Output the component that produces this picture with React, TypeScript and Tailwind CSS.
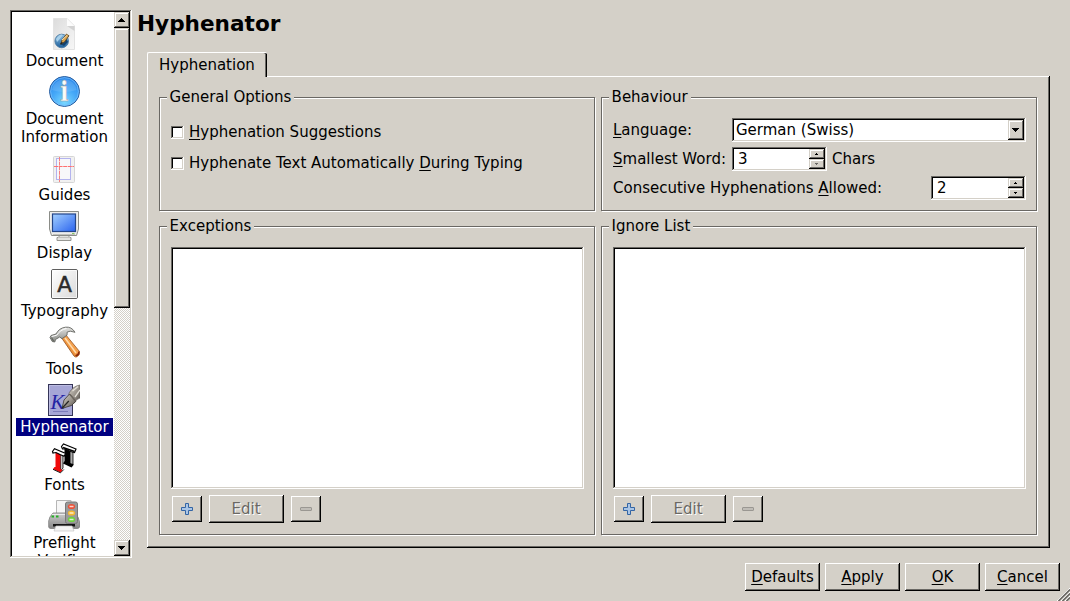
import React from "react";

const raised =
  "bg-[#d4d0c8] shadow-[inset_-1px_-1px_0_#000,inset_1px_1px_0_#fff,inset_-2px_-2px_0_#6a6864]";
const raisedSoft =
  "bg-[#d4d0c8] shadow-[inset_-1px_-1px_0_#000,inset_1px_1px_0_#d4d0c8,inset_-2px_-2px_0_#6a6864,inset_2px_2px_0_#fff]";
const sunken =
  "bg-white shadow-[inset_-1px_-1px_0_#fff,inset_1px_1px_0_#6a6864,inset_-2px_-2px_0_#d4d0c8,inset_2px_2px_0_#000]";

function Key({ children }: { children: React.ReactNode }) {
  return (
    <span className="underline decoration-1 underline-offset-2 [text-decoration-skip-ink:none]">
      {children}
    </span>
  );
}

function DocumentIcon() {
  return (
    <svg width="32" height="32" viewBox="0 0 32 32">
      <defs>
        <linearGradient id="doc" x1="0" y1="0" x2="1" y2="1">
          <stop offset="0" stopColor="#dcdcdc" />
          <stop offset="1" stopColor="#f7f7f7" />
        </linearGradient>
        <linearGradient id="globe" x1="0" y1="0" x2="0" y2="1">
          <stop offset="0" stopColor="#8fbfe2" />
          <stop offset="1" stopColor="#1c5f9c" />
        </linearGradient>
      </defs>
      <path d="M5.5 .5H19L26.5 8V31.5H5.5Z" fill="url(#doc)" stroke="#e3e3e3" />
      <path d="M19 .5L26.5 8V13L19 8Z" fill="#d2d2d2" />
      <path d="M19 .5V8H26.5Z" fill="#fcfcfc" />
      <circle cx="13.7" cy="23" r="6.8" fill="url(#globe)" stroke="#44749c" strokeWidth=".8" />
      <path d="M8 21Q12 15 15 17Q12 21 9 24Z" fill="#a8d0ea" />
      <path d="M12 26L16 28L20 24L18 20Z" fill="#13426e" />
      <path d="M12.8 26L14 22L18.5 16L21 17.8L16.5 24Z" fill="#d6a04c" stroke="#56411f" strokeWidth=".8" />
      <path d="M14 22L19.5 17" stroke="#f9dfac" />
      <path d="M12.6 26.4L14.3 24.2" stroke="#222" strokeWidth="1.2" />
    </svg>
  );
}

function InfoIcon() {
  return (
    <svg width="32" height="32" viewBox="0 0 32 32">
      <defs>
        <radialGradient id="info" cx=".5" cy=".85" r=".85">
          <stop offset="0" stopColor="#7ad8ff" />
          <stop offset=".5" stopColor="#45a8f8" />
          <stop offset="1" stopColor="#2a86ea" />
        </radialGradient>
      </defs>
      <circle cx="16.5" cy="15.5" r="15" fill="url(#info)" stroke="#2b5e9e" />
      <path d="M4 14A12.4 12.4 0 0 1 28.6 14Q16 18 4 14Z" fill="#fff" opacity=".12" />
      <circle cx="16.5" cy="15.5" r="13.9" fill="none" stroke="#7cc0fa" strokeWidth=".7" />
      <text x="16.3" y="25.3" textAnchor="middle" fontFamily="DejaVu Serif" fontWeight="bold" fontSize="27" textLength="8.5" lengthAdjust="spacingAndGlyphs" fill="#fbfbf8" stroke="#8f9ba5" strokeWidth=".5">
        i
      </text>
    </svg>
  );
}

function GuidesIcon() {
  return (
    <svg width="32" height="32" viewBox="0 0 32 32">
      <rect x="5.5" y="4.5" width="21" height="26" rx="1" fill="#f1f1f1" stroke="#d6d6d6" />
      <rect x="8.5" y="6.5" width="14" height="21" fill="#f7f7fa" stroke="#b3b3ee" />
      <path d="M11.5 5V30" stroke="#f58080" strokeDasharray="4 .6" />
      <path d="M6 14.5H26" stroke="#ff7070" strokeDasharray="4 .6" />
    </svg>
  );
}

function DisplayIcon() {
  return (
    <svg width="32" height="32" viewBox="0 0 32 32">
      <defs>
        <linearGradient id="screen" x1="0" y1="0" x2="1" y2="1">
          <stop offset="0" stopColor="#a3d0ff" />
          <stop offset="1" stopColor="#2a63ee" />
        </linearGradient>
      </defs>
      <path d="M11 24H21V27.5H23V30.5H9V27.5H11Z" fill="#e2e2df" stroke="#969692" />
      <path d="M1.5 1.5H30.5V19L28.5 25.5H3.5L1.5 19Z" fill="#eeeeec" stroke="#8b8d88" />
      <path d="M10 27.5H22M5 24.5H27" stroke="#c2c2be" />
      <rect x="4.5" y="4" width="23" height="17.5" fill="url(#screen)" stroke="#24468a" strokeWidth="1.2" />
      <path d="M24 23.5H26.5" stroke="#86c860" />
    </svg>
  );
}

function TypographyIcon() {
  return (
    <svg width="32" height="32" viewBox="0 0 32 32">
      <defs>
        <linearGradient id="key" x1="0" y1="0" x2="1" y2="1">
          <stop offset="0" stopColor="#ffffff" />
          <stop offset="1" stopColor="#d9d9d9" />
        </linearGradient>
      </defs>
      <rect x="3.5" y="1.5" width="26" height="29" rx="1.5" fill="url(#key)" stroke="#5f5f5f" />
      <rect x="4.5" y="2.5" width="24" height="27" fill="none" stroke="#fff" opacity=".7" />
      <text x="16.5" y="24" textAnchor="middle" fontFamily="DejaVu Sans" fontSize="21.5" fill="#2b2b2b" stroke="#2b2b2b" strokeWidth=".5">
        A
      </text>
    </svg>
  );
}

function ToolsIcon() {
  return (
    <svg width="32" height="32" viewBox="0 0 32 32">
      <defs>
        <linearGradient id="handle" x1="0" y1="1" x2="1" y2="0">
          <stop offset="0" stopColor="#c65d0a" />
          <stop offset=".5" stopColor="#f39a42" />
          <stop offset="1" stopColor="#ffc98a" />
        </linearGradient>
        <linearGradient id="steel" x1="0" y1="0" x2="0" y2="1">
          <stop offset="0" stopColor="#e6e6e4" />
          <stop offset="1" stopColor="#858783" />
        </linearGradient>
      </defs>
      <path d="M13 11L17.5 8.5L31.5 25.5Q32 29 29 30.8Q27.3 31.5 26 30Z" fill="url(#handle)" stroke="#95501d" strokeWidth=".8" />
      <path d="M17 12L28 27" stroke="#ffdcae" strokeWidth="1.5" />
      <path d="M28.5 30.5Q32 29.5 31.5 25.5L30 25.5Q30.4 28 27 29.2Z" fill="#8a2708" />
      <path d="M3 9.5L8 8Q11 2 17.5 1.2Q23.5 .4 27 6.3Q21.5 4.2 19.2 6L19 9.2L14 12.7L11.7 11L7.5 13.5L6.8 16L4.3 15.5L2 11.5Z" fill="url(#steel)" stroke="#656762" strokeWidth=".9" />
      <path d="M3.7 10.5L8.8 9.2Q12.3 3.5 18.5 2.5" fill="none" stroke="#fff" />
      <path d="M3.5 11.5L5.7 15.3" stroke="#62655f" strokeWidth="1.2" />
    </svg>
  );
}

function HyphenatorIcon() {
  return (
    <svg width="32" height="32" viewBox="0 0 32 32">
      <defs>
        <linearGradient id="nib" x1="0" y1="0" x2="1" y2="1">
          <stop offset="0" stopColor="#d5d0c7" />
          <stop offset=".55" stopColor="#98928a" />
          <stop offset="1" stopColor="#4f4a46" />
        </linearGradient>
      </defs>
      <rect x=".5" y=".5" width="24" height="31" fill="#a6a6d6" stroke="#353558" />
      <path d="M1.5 31V1.5H24" fill="none" stroke="#bcbce2" />
      <text x="2.5" y="24.5" fontFamily="Liberation Serif" fontStyle="italic" fontSize="21" fill="#2323a3">
        K
      </text>
      <path d="M5 27.5H20" stroke="#7c7cba" />
      <path d="M21 9Q25 2 32 1V14Q28 15 26.5 19L21 16Z" fill="url(#nib)" stroke="#5d5853" strokeWidth=".6" />
      <path d="M24.5 7L30 2.5M27 13L32 6" stroke="#e4e0d8" strokeWidth="1.3" />
      <path d="M14 24.4L16 16L21.5 10L27.8 17.2L23.5 21.5Z" fill="url(#nib)" stroke="#38352f" strokeWidth=".8" />
      <path d="M14.3 24L20.8 17" stroke="#242424" strokeWidth="1.2" />
      <path d="M22 10.5L27.5 17" stroke="#6b655e" strokeWidth="1.4" />
    </svg>
  );
}

function FontsIcon() {
  return (
    <svg width="32" height="32" viewBox="0 0 32 32">
      <path d="M22 9L25 10V22L22 24Z" fill="#aaa" stroke="#000" strokeWidth=".8" />
      <path d="M16.5 6L22 9V21L26 22.5L23.5 25.5L15 21.5L16.5 19Z" fill="#000" />
      <path d="M13.5 4.5L15.5 2L28 7L26.5 10.5L22.5 9.5L17 7L14.5 7Z" fill="#fff" stroke="#000" strokeWidth="1.2" />
      <path d="M15 5.5L26.5 9.5" stroke="#000" strokeWidth="1.6" />
      <path d="M12.3 12L15 13V26L12.5 29Z" fill="#c4c4c4" stroke="#000" strokeWidth=".8" />
      <path d="M7.5 10L12.3 12V27L14.5 28L12.5 30.5L5 27L6.5 25L7.5 25Z" fill="#f00a0a" />
      <path d="M5 27.3L12.5 30.8L15.8 27.5" fill="none" stroke="#000" strokeWidth=".9" />
      <path d="M4.5 9.5L6.5 6.7L17.8 11.5L16 14.2L12 12.5L8 10.5L5 11Z" fill="#fff" stroke="#000" strokeWidth="1.2" />
    </svg>
  );
}

function PreflightIcon() {
  return (
    <svg width="32" height="32" viewBox="0 0 32 32">
      <defs>
        <linearGradient id="printer" x1="0" y1="0" x2="0" y2="1">
          <stop offset="0" stopColor="#cfcfcf" />
          <stop offset="1" stopColor="#858585" />
        </linearGradient>
      </defs>
      <path d="M8.5 .5H23V16H8.5Z" fill="#f6f6f6" stroke="#b6b6b6" />
      <path d="M5 13H27Q31 17 31.5 22V27Q31 28.5 29 28.5H3Q1 28.5 .7 27V21Q1 17 5 13Z" fill="url(#printer)" stroke="#7c7c7c" strokeWidth=".8" />
      <path d="M4 14.5H25" stroke="#ebebeb" />
      <path d="M5 24H27V26.5H5Z" fill="#151515" />
      <path d="M8 26H24L26 31H6Z" fill="#f4f4f4" stroke="#c5c5c5" strokeWidth=".7" />
      <path d="M3.5 16.5H6M8 16.5H10.5" stroke="#25ad25" strokeWidth="1.8" />
      <rect x="17.5" y="2" width="12" height="21.5" rx="2" fill="#9a9a9a" stroke="#787878" />
      <ellipse cx="23.5" cy="6.5" rx="3.6" ry="2.6" fill="#ed5037" />
      <ellipse cx="23.5" cy="13" rx="3.6" ry="2.6" fill="#f6b82e" />
      <ellipse cx="23.5" cy="19.4" rx="3.6" ry="2.6" fill="#6ed33c" />
      <path d="M21.5 6.5H25.5M21.5 13H25.5M21.5 19.5H25.5" stroke="#fff" strokeWidth="1.3" opacity=".75" />
    </svg>
  );
}

const sections: { lines: string[]; icon: React.ReactNode; active?: boolean }[] = [
  { lines: ["Document"], icon: <DocumentIcon /> },
  { lines: ["Document", "Information"], icon: <InfoIcon /> },
  { lines: ["Guides"], icon: <GuidesIcon /> },
  { lines: ["Display"], icon: <DisplayIcon /> },
  { lines: ["Typography"], icon: <TypographyIcon /> },
  { lines: ["Tools"], icon: <ToolsIcon /> },
  { lines: ["Hyphenator"], icon: <HyphenatorIcon />, active: true },
  { lines: ["Fonts"], icon: <FontsIcon /> },
  { lines: ["Preflight", "Verifier"], icon: <PreflightIcon /> },
];

function Arrow({ up = false, small = false, color = "#000" }: { up?: boolean; small?: boolean; color?: string }) {
  const w = small ? 3 : 7;
  const h = small ? 2 : 4;
  const rows = Array.from({ length: h }, (_, i) => i);
  return (
    <svg className="mr-px" width={w} height={h} viewBox={`0 0 ${w} ${h}`} shapeRendering="crispEdges">
      {rows.map((i) => {
        const inset = up ? h - 1 - i : i;
        return <rect key={i} x={inset} y={i} width={w - inset * 2} height="1" fill={color} />;
      })}
    </svg>
  );
}

function Sidebar() {
  return (
    <div className={`flex h-[548px] w-[122px] shrink-0 p-[2px] ${sunken}`}>
      <ul className="flex h-[544px] w-[102px] flex-col items-center gap-[6px] overflow-hidden pl-[3px] pt-[6px]">
        {sections.map((s, i) => (
          <li key={i} className="flex shrink-0 flex-col items-center gap-[2px]">
            <div className="mr-px h-8 w-8">{s.icon}</div>
            <div
              className={
                s.active
                  ? "w-[97px] bg-[#000080] text-center text-white"
                  : "w-[97px] text-center"
              }
            >
              {s.lines.map((l) => (
                <div key={l}>{l}</div>
              ))}
            </div>
          </li>
        ))}
      </ul>
      <div className="flex h-[544px] w-4 flex-col bg-[repeating-conic-gradient(#fff_0_25%,#d4d0c8_0_50%)] bg-[length:2px_2px]">
        <div className={`flex h-4 items-center justify-center ${raisedSoft}`}>
          <Arrow up />
        </div>
        <div className={`h-[280px] ${raisedSoft}`} />
        <div className={`mt-auto flex h-4 items-center justify-center ${raisedSoft}`}>
          <Arrow />
        </div>
      </div>
    </div>
  );
}

function Group({ title, className, children }: { title: string; className: string; children: React.ReactNode }) {
  return (
    <section
      className={`relative w-[436px] border border-[#6a6864] shadow-[1px_1px_0_#fff,inset_1px_1px_0_#fff] ${className}`}
    >
      <h2 className="absolute left-[7px] top-[-10px] bg-[#d4d0c8] pl-[2.6px] pr-[3px]">{title}</h2>
      {children}
    </section>
  );
}

function Check({ children }: { children: React.ReactNode }) {
  return (
    <label className="flex h-[18px] items-center gap-[5px]">
      <span className={`mt-px h-[13px] w-[13px] ${sunken}`} />
      <span>{children}</span>
    </label>
  );
}

function Spin({ value, atMin = false }: { value: string; atMin?: boolean }) {
  return (
    <div className={`flex h-6 w-[95px] items-center justify-between p-[2px] ${sunken}`}>
      <span className="pl-[4px]">{value}</span>
      <div className="flex w-4 flex-col">
        <div className={`flex h-[10px] items-center justify-center ${raisedSoft}`}>
          <Arrow up small />
        </div>
        <div className={`flex h-[10px] items-center justify-center ${raisedSoft}`}>
          <Arrow small color={atMin ? "#6a6864" : "#000"} />
        </div>
      </div>
    </div>
  );
}

function WordList({ title }: { title: string }) {
  return (
    <Group title={title} className="h-[309px] pl-[11px] pt-5">
      <div className={`h-[242px] w-[413px] ${sunken}`} />
      <div className="flex items-center gap-[7px] pl-px pt-[6px]">
        <button className={`flex h-[26px] w-[30px] items-center justify-center ${raised}`}>
          <svg width="12" height="12" viewBox="0 0 12 12">
            <path d="M4.5.5H7.5V4.5H11.5V7.5H7.5V11.5H4.5V7.5H.5V4.5H4.5Z" fill="#a9c5e6" stroke="#3465a4" strokeLinejoin="round" />
          </svg>
        </button>
        <button className={`h-7 w-[75px] pr-px text-[#6a6864] [text-shadow:1px_1px_0_#fff] ${raised}`}>Edit</button>
        <button className={`flex h-[26px] w-[30px] items-center justify-center ${raised}`}>
          <svg width="12" height="4" viewBox="0 0 12 4">
            <rect x=".5" y=".5" width="11" height="3" rx=".5" fill="#c0bdb7" stroke="#9a9792" />
          </svg>
        </button>
      </div>
    </Group>
  );
}

function ActionButton({ k, rest }: { k: string; rest: string }) {
  return (
    <button className={`h-7 w-[75px] ${raised}`}>
      <Key>{k}</Key>
      {rest}
    </button>
  );
}

export default function App() {
  return (
    <div className="relative flex h-[601px] w-[1070px] flex-col overflow-hidden bg-[#d4d0c8] pl-[10px] pt-[10px] font-['DejaVu_Sans',sans-serif] text-[15px] leading-[18px] text-black">
      <div className="flex gap-[5px]">
        <Sidebar />
        <main className="flex flex-col">
          <h1 className="h-[42px] pt-px text-[21.6px] font-bold leading-[26px]">Hyphenator</h1>
          <div className="flex flex-col pl-[10px]">
            <div className="relative z-10 h-[25px] w-[120px] rounded-tl-[2px] rounded-tr-[2px] border-l border-t border-white bg-[#d4d0c8] pl-[11px] pt-[3px] shadow-[inset_-1px_0_0_#000,inset_-2px_0_0_#6a6864]">
              Hyphenation
            </div>
            <div className="-mt-px grid h-[472px] w-[903px] grid-cols-[436px_436px] content-start gap-x-[6px] gap-y-[15px] pl-3 pt-[21px] shadow-[inset_-1px_-1px_0_#000,inset_1px_1px_0_#fff,inset_-2px_-2px_0_#6a6864]">
              <Group title="General Options" className="flex h-[114px] flex-col gap-[13px] pl-[11px] pt-[25px]">
                <Check>
                  <Key>H</Key>yphenation Suggestions
                </Check>
                <Check>
                  Hyphenate Text Automatically <Key>D</Key>uring Typing
                </Check>
              </Group>
              <Group title="Behaviour" className="flex h-[114px] flex-col gap-[5px] pl-[11px] pt-5">
                <div className="flex items-center">
                  <span className="w-[119px]">
                    <Key>L</Key>anguage:
                  </span>
                  <div className={`flex h-6 w-[294px] items-center justify-between p-[2px] ${sunken}`}>
                    <span className="pl-[2px]">German (Swiss)</span>
                    <div className={`flex h-5 w-4 items-center justify-center ${raisedSoft}`}>
                      <Arrow />
                    </div>
                  </div>
                </div>
                <div className="flex items-center">
                  <span className="w-[119px] whitespace-nowrap">
                    <Key>S</Key>mallest Word:
                  </span>
                  <Spin value="3" atMin />
                  <span className="pl-[5px]">Chars</span>
                </div>
                <div className="flex items-center">
                  <span className="w-[318px]">
                    Consecutive Hyphenations <Key>A</Key>llowed:
                  </span>
                  <Spin value="2" />
                </div>
              </Group>
              <WordList title="Exceptions" />
              <WordList title="Ignore List" />
            </div>
          </div>
        </main>
      </div>
      <footer className="flex justify-end gap-[5px] pr-[10px] pt-[5px]">
        <ActionButton k="D" rest="efaults" />
        <ActionButton k="A" rest="pply" />
        <ActionButton k="O" rest="K" />
        <ActionButton k="C" rest="ancel" />
      </footer>
      <svg className="absolute bottom-0 right-0" width="13" height="13" viewBox="0 0 13 13">
        <path d="M0 13L13 0M4 13L13 4M8 13L13 8" stroke="#fff" />
        <path d="M1.5 13L13 1.5M5.5 13L13 5.5M9.5 13L13 9.5" stroke="#6a6864" strokeWidth="1.6" />
      </svg>
    </div>
  );
}
